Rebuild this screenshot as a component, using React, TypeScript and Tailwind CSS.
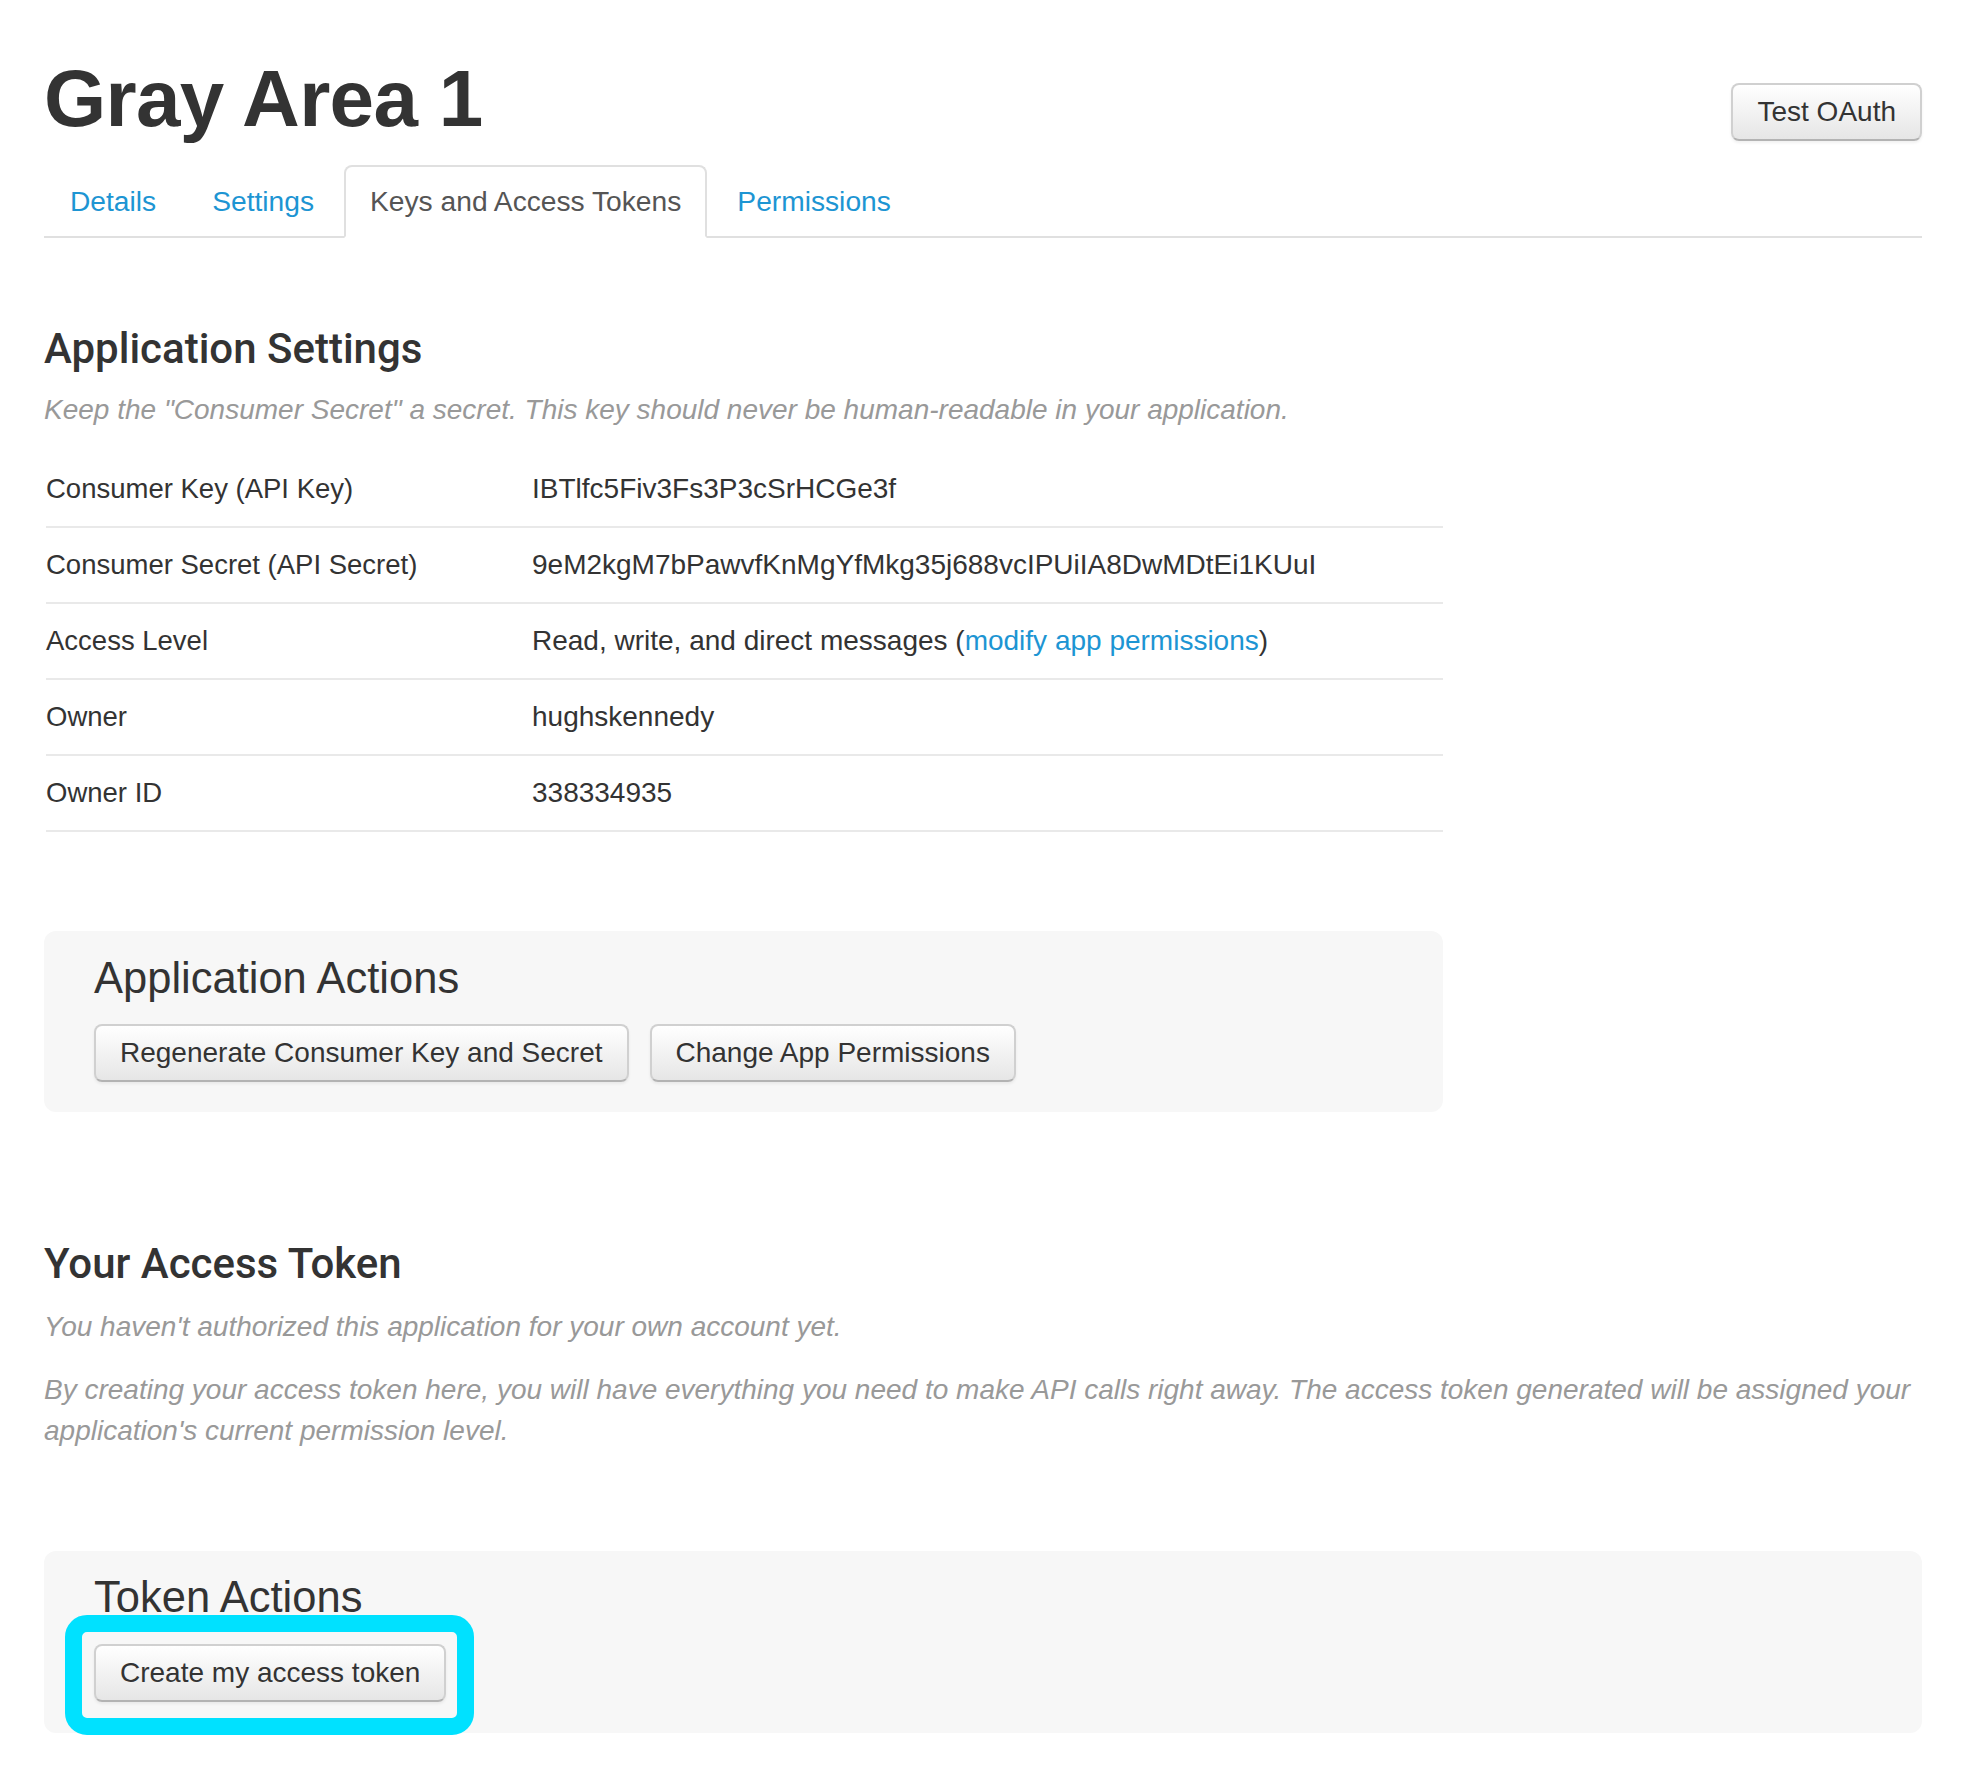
import React from "react"

const sans = { fontFamily: '"Liberation Sans", Arial, sans-serif' }
const heading = { fontFamily: "Roboto, sans-serif" }

function Btn({ children }: { children: React.ReactNode }) {
  return (
    <button className="h-[58px] px-[24px] rounded-[8px] border-2 border-[#d0d0d0] border-b-[#b3b3b3] bg-linear-to-b from-white to-[#e6e6e6] text-[28px] leading-none text-[#333] shadow-[0_2px_3px_rgba(0,0,0,0.06)] whitespace-nowrap">
      {children}
    </button>
  )
}

const rows: { label: string; value: React.ReactNode }[] = [
  { label: "Consumer Key (API Key)", value: "IBTlfc5Fiv3Fs3P3cSrHCGe3f" },
  { label: "Consumer Secret (API Secret)", value: "9eM2kgM7bPawvfKnMgYfMkg35j688vcIPUiIA8DwMDtEi1KUuI" },
  {
    label: "Access Level",
    value: (
      <>
        Read, write, and direct messages (<a className="text-[#1d95d3]">modify app permissions</a>)
      </>
    ),
  },
  { label: "Owner", value: "hughskennedy" },
  { label: "Owner ID", value: "338334935" },
]

const tabs = ["Details", "Settings", "Keys and Access Tokens", "Permissions"]

export default function App() {
  return (
    <div className="min-h-[1768px] bg-white pl-[44px] pr-[52px] pt-[59px] text-[#333]" style={sans}>
      <div className="flex justify-between items-start">
        <h1 className="text-[80px] leading-[80px] font-bold tracking-[-0.7px] text-[#333]">Gray Area 1</h1>
        <div className="mt-[24px]">
          <Btn>Test OAuth</Btn>
        </div>
      </div>

      <ul className="mt-[24px] flex border-b-2 border-[#e0e0e0]">
        {tabs.map((t) => {
          const active = t === "Keys and Access Tokens"
          return (
            <li
              key={t}
              className={`-mb-[2px] mr-[4px] h-[73px] flex items-center px-[24px] text-[28.2px] border-2 rounded-t-[8px] ${
                active ? "border-[#e0e0e0] border-b-white bg-white text-[#555]" : "border-transparent text-[#1d95d3]"
              }`}
            >
              {t}
            </li>
          )
        })}
      </ul>

      <div className="w-[1399px]">
        <h2 className="mt-[86px] text-[42px] leading-[50px] font-medium text-[#333]" style={heading}>
          Application Settings
        </h2>
        <p className="mt-[18px] text-[28px] leading-[36px] italic text-[#999] whitespace-nowrap">
          Keep the "Consumer Secret" a secret. This key should never be human-readable in your application.
        </p>

        <div className="mt-[24px] ml-[2px]">
          {rows.map((r) => (
            <div key={r.label} className="grid grid-cols-[486px_1fr] border-b-2 border-[#e9e9e9] pt-[17px] pb-[17px] text-[28px] leading-[40px]">
              <div className="text-[27.5px]">{r.label}</div>
              <div>{r.value}</div>
            </div>
          ))}
        </div>

        <div className="mt-[99px] h-[181px] rounded-[12px] bg-[#f7f7f7] pl-[50px] pt-[24px]">
          <h3 className="text-[43.5px] leading-[46px] text-[#333]">Application Actions</h3>
          <div className="mt-[23px] flex gap-[21px]">
            <Btn>Regenerate Consumer Key and Secret</Btn>
            <Btn>Change App Permissions</Btn>
          </div>
        </div>
      </div>

      <h2 className="mt-[127px] text-[42px] leading-[50px] font-medium text-[#333]" style={heading}>
        Your Access Token
      </h2>
      <p className="mt-[17px] text-[28px] leading-[41px] italic text-[#999]">
        You haven't authorized this application for your own account yet.
      </p>
      <p className="mt-[22px] text-[28px] leading-[41px] italic text-[#999]">
        By creating your access token here, you will have everything you need to make API calls right away. The access token generated will be assigned your application's current permission level.
      </p>

      <div className="mt-[100px] h-[182px] rounded-[12px] bg-[#f7f7f7] pl-[50px] pt-[23px]">
        <h3 className="text-[43.5px] leading-[46px] text-[#333]">Token Actions</h3>
        <div className="mt-[24px] relative inline-block">
          <Btn>Create my access token</Btn>
          <div className="absolute -left-[29px] -right-[28px] -top-[29px] -bottom-[33px] rounded-[22px] border-[17px] border-[#00e1ff]" />
        </div>
      </div>
    </div>
  )
}
